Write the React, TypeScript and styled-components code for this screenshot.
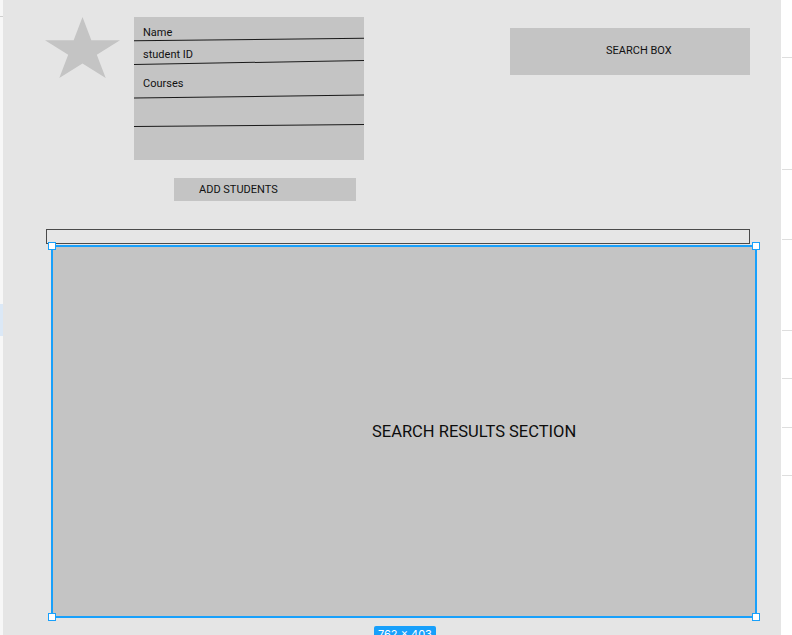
import styled, { createGlobalStyle } from 'styled-components';

const GlobalStyle = createGlobalStyle`
  html, body {
    margin: 0;
    padding: 0;
    width: 792px;
    height: 635px;
    overflow: hidden;
    background: #ffffff;
    font-family: Roboto, 'Liberation Sans', Arial, sans-serif;
  }
`;

const Workspace = styled.div`
  display: flex;
  width: 792px;
  height: 635px;
`;

const LeftGutter = styled.div`
  width: 3px;
  flex: none;
  background: #f7f7f7;
  display: flex;
  flex-direction: column;
`;

const GutterTick = styled.div`
  margin-top: 16px;
  height: 1px;
  width: 4px;
  background: #cfcfcf;
`;

const GutterHighlight = styled.div`
  margin-top: 287px;
  height: 32px;
  background: #dbe8f6;
`;

const Canvas = styled.div`
  width: 778px;
  height: 635px;
  flex: none;
  background: #e5e5e5;
  overflow: hidden;
  display: flex;
  flex-direction: column;
  align-items: flex-start;

  & > * {
    flex-shrink: 0;
  }
`;

const RightPanel = styled.div`
  flex: 1;
  background: #ffffff;
  display: flex;
  flex-direction: column;
`;

const PanelRule = styled.div<{ $gap: number }>`
  margin-top: ${(p) => p.$gap}px;
  margin-left: 1px;
  height: 1px;
  flex: none;
  background: #dedede;
`;

const Header = styled.div`
  display: flex;
  align-items: flex-start;
  padding: 17px 0 0 42px;
`;

const Star = styled.svg`
  display: block;
  width: 75px;
  height: 61px;
  flex: none;
`;

const FormColumn = styled.div`
  margin-left: 14px;
  width: 230px;
  display: flex;
  flex-direction: column;
`;

const FormCard = styled.div`
  height: 143px;
  background: #c4c4c4;
  display: flex;
  flex-direction: column;
`;

const FieldRow = styled.div<{ $h: number; $pad: number; $tilt: number }>`
  position: relative;
  height: ${(p) => p.$h}px;
  padding: ${(p) => p.$pad}px 0 0 9px;
  box-sizing: border-box;
  font-size: 11px;
  line-height: 13px;
  color: #111;

  &::after {
    content: '';
    position: absolute;
    left: 0;
    right: 0;
    bottom: -0.5px;
    height: 1px;
    background: #1a1a1a;
    transform: rotate(${(p) => -p.$tilt}deg);
  }
`;

const AddButton = styled.div`
  margin: 18px 0 0 40px;
  width: 182px;
  height: 23px;
  padding-left: 25px;
  box-sizing: border-box;
  background: #c4c4c4;
  font-size: 11px;
  line-height: 23px;
  color: #111;
`;

const SearchBox = styled.div`
  margin: 11px 0 0 146px;
  width: 240px;
  height: 47px;
  padding: 16px 0 0 96px;
  box-sizing: border-box;
  background: #c4c4c4;
  font-size: 11px;
  line-height: 13px;
  color: #111;
`;

const FilterBar = styled.div`
  margin: 28px 0 0 43px;
  width: 704px;
  height: 15px;
  box-sizing: border-box;
  border: 1px solid #4a4a4a;
  background: #e6e6e6;
`;

const Results = styled.div`
  position: relative;
  margin: 1px 0 0 48px;
  width: 706px;
  height: 373px;
  box-sizing: border-box;
  border: 2px solid #18a0fb;
  background: #c4c4c4;
  display: flex;
  align-items: center;
  padding-left: 319px;
  font-size: 16.5px;
  color: #0d0d0d;
`;

const Handle = styled.span<{ $v: 'top' | 'bottom'; $h: 'left' | 'right' }>`
  position: absolute;
  ${(p) => p.$v}: -5px;
  ${(p) => p.$h}: -5px;
  width: 8px;
  height: 8px;
  box-sizing: border-box;
  border: 1.5px solid #18a0fb;
  background: #ffffff;
`;

const SizeBadge = styled.div`
  margin: 8px 0 0 371px;
  height: 16px;
  padding: 0 4px;
  border-radius: 2px;
  background: #18a0fb;
  color: #ffffff;
  font-family: Inter, Roboto, sans-serif;
  font-size: 11px;
  line-height: 17px;
  white-space: nowrap;
`;

const fields = [
  { label: 'Name', h: 22, pad: 9, tilt: 0.65 },
  { label: 'student ID', h: 23, pad: 9, tilt: 1.05 },
  { label: 'Courses', h: 34, pad: 15, tilt: 0.8 },
  { label: '', h: 29, pad: 0, tilt: 0.5 },
];

// y positions of the faint rules in the side panel
const rulePositions = [57, 169, 239, 330, 378, 427, 475];

export default function App() {
  return (
    <>
      <GlobalStyle />
      <Workspace>
        <LeftGutter>
          <GutterTick />
          <GutterHighlight />
        </LeftGutter>
        <Canvas>
          <Header>
            <Star viewBox="0 0 75 61" preserveAspectRatio="none">
              <polygon
                fill="#c4c4c4"
                points="37.5,0 46.35,23.3 75,23.3 51.8,37.7 60.7,61 37.5,46.6 14.3,61 23.2,37.7 0,23.3 28.65,23.3"
              />
            </Star>
            <FormColumn>
              <FormCard>
                {fields.map((f, i) => (
                  <FieldRow key={i} $h={f.h} $pad={f.pad} $tilt={f.tilt}>
                    {f.label}
                  </FieldRow>
                ))}
              </FormCard>
              <AddButton>ADD STUDENTS</AddButton>
            </FormColumn>
            <SearchBox>SEARCH BOX</SearchBox>
          </Header>
          <FilterBar />
          <Results>
            SEARCH RESULTS SECTION
            <Handle $v="top" $h="left" />
            <Handle $v="top" $h="right" />
            <Handle $v="bottom" $h="left" />
            <Handle $v="bottom" $h="right" />
          </Results>
          <SizeBadge>762 × 403</SizeBadge>
        </Canvas>
        <RightPanel>
          {rulePositions.map((y, i) => (
            <PanelRule
              key={y}
              $gap={i === 0 ? y : y - rulePositions[i - 1] - 1}
            />
          ))}
        </RightPanel>
      </Workspace>
    </>
  );
}
